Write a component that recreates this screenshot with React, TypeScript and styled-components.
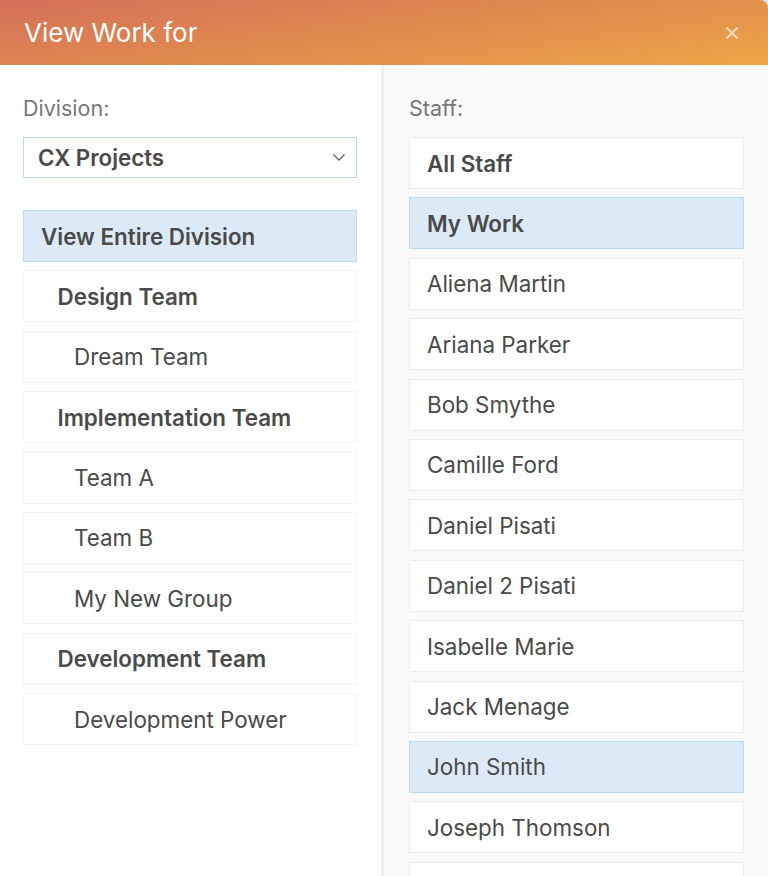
import React from "react";
import styled, { createGlobalStyle } from "styled-components";

const GlobalStyle = createGlobalStyle`
  html, body { margin: 0; padding: 0; background: #e9e9e9; }
  body { font-family: Inter, "Noto Sans", Arial, sans-serif; -webkit-font-smoothing: antialiased; }
  * { box-sizing: border-box; }
`;

const Modal = styled.div`
  width: 768px;
  height: 876px;
  display: flex;
  flex-direction: column;
  background: #fff;
  border-top-right-radius: 8px;
  overflow: hidden;
`;

const Header = styled.header`
  height: 65px;
  flex: none;
  display: flex;
  align-items: center;
  justify-content: space-between;
  padding: 0 28px 0 24px;
  background: linear-gradient(172deg, #d5705a 0%, #e08a4e 50%, #eda647 100%);
`;

const Title = styled.h1`
  margin: 0;
  font-size: 26px;
  font-weight: 400;
  color: #fff;
`;

const Close = styled.button`
  border: 0;
  background: none;
  padding: 0;
  width: 16px;
  height: 16px;
  display: flex;
  align-items: center;
  justify-content: center;
  cursor: pointer;
`;

const Body = styled.div`
  flex: 1;
  display: grid;
  grid-template-columns: 381px 3px 1fr;
  min-height: 0;
`;

const Divider = styled.div`
  background: #efefef;
`;

const Column = styled.section<{ $tint?: boolean }>`
  background: ${(p) => (p.$tint ? "#fafafa" : "#fff")};
  padding: ${(p) => (p.$tint ? "31px 24px 0 25px" : "31px 24px 0 23px")};
  display: flex;
  flex-direction: column;
  overflow: hidden;
`;

const Label = styled.div`
  font-size: 21.5px;
  color: #777;
  line-height: 24px;
  height: 24px;
  margin-bottom: 17px;
`;

const Select = styled.div`
  height: 41px;
  border: 1.5px solid #bcdcf2;
  background: #fff;
  display: flex;
  align-items: center;
  justify-content: space-between;
  padding: 0 10px 0 14px;
  font-size: 22.3px;
  font-weight: 600;
  color: #4a4a4a;
  margin-bottom: 32px;
`;

const List = styled.div`
  display: flex;
  flex-direction: column;
  gap: 8.4px;
`;

const Item = styled.div<{ $level?: number; $bold?: boolean; $selected?: boolean; $soft?: boolean }>`
  height: 52px;
  flex: none;
  display: flex;
  align-items: center;
  padding-left: ${(p) => 17 + (p.$level || 0) * 16.5}px;
  font-size: 22.4px;
  font-weight: ${(p) => (p.$bold ? 600 : 400)};
  color: #4a4a4a;
  background: ${(p) => (p.$selected ? "#dceaf7" : "#fff")};
  border: 1.5px solid ${(p) => (p.$selected ? "#b8dcf3" : p.$soft ? "#f4f4f8" : "#ececec")};
  white-space: nowrap;
`;

const divisions = [
  { name: "View Entire Division", level: 0, bold: true, selected: true },
  { name: "Design Team", level: 1, bold: true },
  { name: "Dream Team", level: 2 },
  { name: "Implementation Team", level: 1, bold: true },
  { name: "Team A", level: 2 },
  { name: "Team B", level: 2 },
  { name: "My New Group", level: 2 },
  { name: "Development Team", level: 1, bold: true },
  { name: "Development Power", level: 2 },
];

const staff = [
  { name: "All Staff", bold: true },
  { name: "My Work", bold: true, selected: true },
  { name: "Aliena Martin" },
  { name: "Ariana Parker" },
  { name: "Bob Smythe" },
  { name: "Camille Ford" },
  { name: "Daniel Pisati" },
  { name: "Daniel 2 Pisati" },
  { name: "Isabelle Marie" },
  { name: "Jack Menage" },
  { name: "John Smith", selected: true },
  { name: "Joseph Thomson" },
  { name: "" },
];

export default function App() {
  return (
    <>
      <GlobalStyle />
      <Modal>
        <Header>
          <Title>View Work for</Title>
          <Close aria-label="Close">
            <svg width="14" height="14" viewBox="0 0 14 14">
              <path d="M2 2 L12 12 M12 2 L2 12" stroke="#f6dcc4" strokeWidth="2" strokeLinecap="round" />
            </svg>
          </Close>
        </Header>
        <Body>
          <Column>
            <Label>Division:</Label>
            <Select>
              <span>CX Projects</span>
              <svg width="14" height="9" viewBox="0 0 14 9">
                <path d="M1.5 1.5 L7 7 L12.5 1.5" fill="none" stroke="#666" strokeWidth="1.4" />
              </svg>
            </Select>
            <List>
              {divisions.map((d) => (
                <Item key={d.name} $level={d.level} $bold={d.bold} $selected={d.selected} $soft>
                  {d.name}
                </Item>
              ))}
            </List>
          </Column>
          <Divider />
          <Column $tint>
            <Label>Staff:</Label>
            <List>
              {staff.map((s, i) => (
                <Item key={i} $bold={s.bold} $selected={s.selected}>
                  {s.name}
                </Item>
              ))}
            </List>
          </Column>
        </Body>
      </Modal>
    </>
  );
}
